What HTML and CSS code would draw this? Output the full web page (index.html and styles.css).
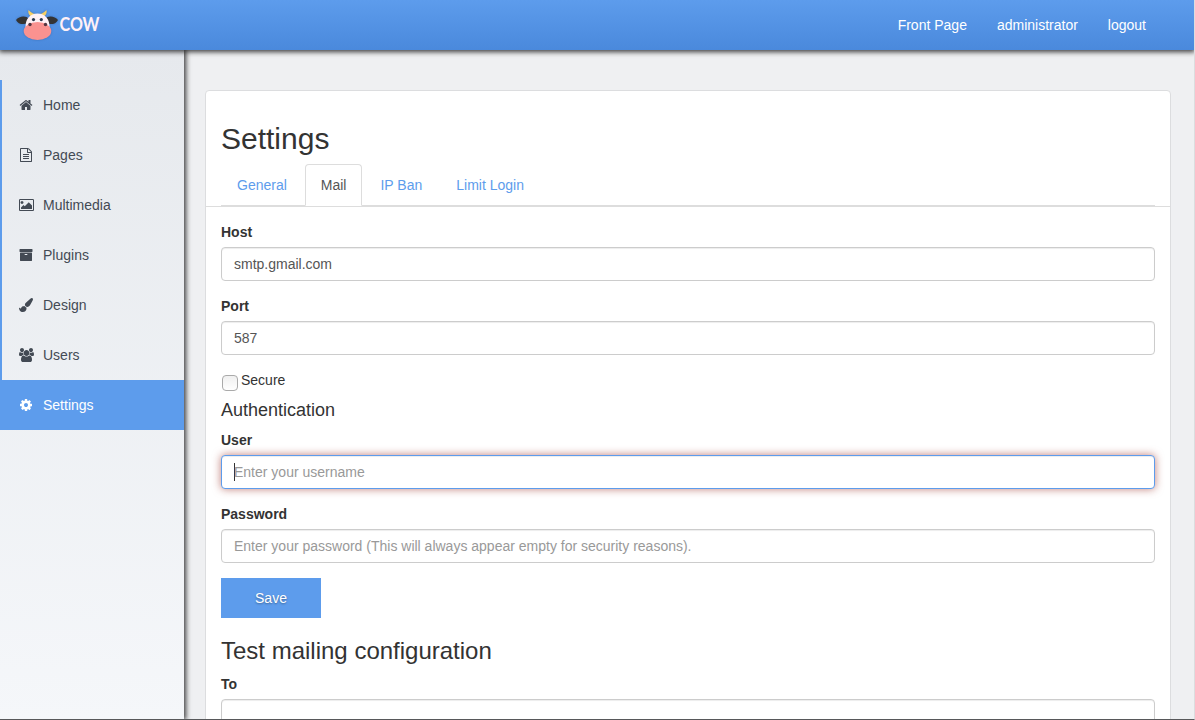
FILE: index.html
```
<!DOCTYPE html>
<html lang="en">
<head>
<meta charset="utf-8">
<title>Settings</title>
<link rel="stylesheet" href="styles.css">
</head>
<body>
<header class="topbar">
  <svg class="logo" viewBox="0 0 90 42" width="90" height="42" role="img" aria-label="Cow">
    <g class="halo">
      <path fill="#f6cf62" d="M13.5 7c-.8 4 1.2 6.500 5 7l1.500-3c-3-.5-4-2-6.500-4zM31.500 7c.8 4-1.200 6.500-5 7l-1.500-3c3-.5 4-2 6.500-4z"/>
      <path fill="#343434" d="M1 17c3-4 10-5 13-1l-1 4c-4 2-10 1.500-12-3zM43 17c-3-4-10-5-13-1l1 4c4 2 10 1.500 12-3z"/>
      <path fill="#fff1f5" d="M10.500 25c-.5-9 4.500-14.500 12-14.500S35 16 34.500 25z"/>
      <ellipse cx="22.500" cy="28" rx="13.800" ry="9" fill="#fa9290"/>
    </g>
    <g fill="#28384d"><circle cx="18.500" cy="16.600" r="1.600"/><circle cx="26.300" cy="16.600" r="1.600"/></g>
    <g fill="#54343f"><circle cx="15" cy="21.500" r="1.700"/><circle cx="30.500" cy="21.500" r="1.700"/></g>
    <text class="logo-text" x="44.500" y="28.300" textLength="40" lengthAdjust="spacingAndGlyphs">COW</text>
  </svg>
  <nav class="topnav"><a>Front Page</a><a>administrator</a><a>logout</a></nav>
</header>
<div class="layout">
  <aside class="sidebar">
    <ul class="menu">
      <li class="item"><svg class="icon" viewBox="0 0 1792 1792"><path d="M1472 992v480q0 26-19 45t-45 19h-384v-384h-256v384h-384q-26 0-45-19t-19-45v-480q0-1 .5-3t.5-3l575-474 575 474q1 2 1 6zm223-69l-62 74q-8 9-21 11h-3q-13 0-21-7l-692-577-692 577q-12 8-24 7-13-2-21-11l-62-74q-8-10-7-23.500t11-21.500l719-599q32-26 76-26t76 26l244 204v-195q0-14 9-23t23-9h192q14 0 23 9t9 23v408l219 182q10 8 11 21.500t-7 23.500z"/></svg>Home</li>
      <li class="item"><svg class="icon" viewBox="0 0 1792 1792"><path d="M1596 380q28 28 48 76t20 88v1152q0 40-28 68t-68 28h-1344q-40 0-68-28t-28-68v-1600q0-40 28-68t68-28h896q40 0 88 20t76 48zm-444-244v376h376q-10-29-22-41l-313-313q-12-12-41-22zm384 1528v-1024h-416q-40 0-68-28t-28-68v-416h-768v1536h1280zm-1024-864q0-14 9-23t23-9h704q14 0 23 9t9 23v64q0 14-9 23t-23 9h-704q-14 0-23-9t-9-23v-64zm736 224q14 0 23 9t9 23v64q0 14-9 23t-23 9h-704q-14 0-23-9t-9-23v-64q0-14 9-23t23-9h704zm0 256q14 0 23 9t9 23v64q0 14-9 23t-23 9h-704q-14 0-23-9t-9-23v-64q0-14 9-23t23-9h704z"/></svg>Pages</li>
      <li class="item"><svg class="icon wide" viewBox="0 0 1920 1792"><path d="M576 576q0 80-56 136t-136 56-136-56-56-136 56-136 136-56 136 56 56 136zm1088 384v448h-1408v-192l320-320 160 160 512-512zm96-704h-1600q-13 0-22.500 9.500t-9.500 22.500v1216q0 13 9.500 22.500t22.500 9.500h1600q13 0 22.500-9.500t9.500-22.500v-1216q0-13-9.500-22.500t-22.500-9.500zm160 32v1216q0 66-47 113t-113 47h-1600q-66 0-113-47t-47-113v-1216q0-66 47-113t113-47h1600q66 0 113 47t47 113z"/></svg>Multimedia</li>
      <li class="item"><svg class="icon" viewBox="0 0 1792 1792"><path d="M1088 832q0-26-19-45t-45-19h-256q-26 0-45 19t-19 45 19 45 45 19h256q26 0 45-19t19-45zm576-192v960q0 26-19 45t-45 19h-1408q-26 0-45-19t-19-45v-960q0-26 19-45t45-19h1408q26 0 45 19t19 45zm64-448v256q0 26-19 45t-45 19h-1536q-26 0-45-19t-19-45v-256q0-26 19-45t45-19h1536q26 0 45 19t19 45z"/></svg>Plugins</li>
      <li class="item"><svg class="icon" viewBox="0 0 1792 1792"><path d="M1615 0q70 0 122.500 46.500t52.500 116.500q0 63-45 151-332 629-465 752-97 91-218 91-126 0-216.500-92.500t-90.500-219.500q0-128 92-212l638-579q59-54 130-54zm-909 1034q39 76 106.500 130t150.500 76l1 71q4 213-129.500 347t-348.500 134q-123 0-218-46.500t-152.500-127.500-86.500-183-29-220q7 5 41 30t62 44.500 59 36.500 46 17q41 0 55-37 25-66 57.500-112.500t69.500-76 88-47.500 103-25.500 125-10.500z"/></svg>Design</li>
      <li class="item"><svg class="icon wide" viewBox="0 0 1920 1792"><path d="M593 896q-162 5-265 128h-134q-82 0-138-40.500t-56-118.500q0-353 124-353 6 0 43.500 21t97.500 42.500 119 21.500q67 0 133-23-5 37-5 66 0 139 81 256zm1071 637q0 120-73 189.500t-194 69.500h-874q-121 0-194-69.500t-73-189.500q0-53 3.500-103.500t14-109 26.500-108.500 43-97.500 62-81 85.500-53.500 111.500-20q10 0 43 21.500t73 48 107 48 135 21.500 135-21.500 107-48 73-48 43-21.500q61 0 111.500 20t85.500 53.500 62 81 43 97.500 26.500 108.500 14 109 3.500 103.500zm-1024-1277q0 106-75 181t-181 75-181-75-75-181 75-181 181-75 181 75 75 181zm704 384q0 159-112.500 271.500t-271.500 112.500-271.500-112.500-112.500-271.500 112.500-271.500 271.500-112.500 271.500 112.500 112.500 271.500zm576 225q0 78-56 118.500t-138 40.500h-134q-103-123-265-128 81-117 81-256 0-29-5-66 66 23 133 23 59 0 119-21.500t97.500-42.500 43.500-21q124 0 124 353zm-128-609q0 106-75 181t-181 75-181-75-75-181 75-181 181-75 181 75 75 181z"/></svg>Users</li>
      <li class="item active"><svg class="icon" viewBox="0 0 1792 1792"><path d="M1152 896q0-106-75-181t-181-75-181 75-75 181 75 181 181 75 181-75 75-181zm512-109v222q0 12-8 23t-20 13l-185 28q-19 54-39 91 35 50 107 138 10 12 10 25t-9 23q-27 37-99 108t-94 71q-12 0-26-9l-138-108q-44 23-91 38-16 136-29 186-7 28-36 28h-222q-14 0-24.500-8.500t-11.500-21.500l-28-184q-49-16-90-37l-141 107q-10 9-25 9-14 0-25-11-126-114-165-168-7-10-7-23 0-12 8-23 15-21 51-66.500t54-70.500q-27-50-41-99l-183-27q-13-2-21-12.500t-8-23.500v-222q0-12 8-23t19-13l186-28q14-46 39-92-40-57-107-138-10-12-10-24 0-10 9-23 26-36 98.500-107.500t94.500-71.500q13 0 26 10l138 107q44-23 91-38 16-136 29-186 7-28 36-28h222q14 0 24.500 8.500t11.500 21.500l28 184q49 16 90 37l142-107q9-9 24-9 13 0 25 10 129 119 165 170 7 8 7 22 0 12-8 23-15 21-51 66.500t-54 70.500q26 50 41 98l183 28q13 2 21 12.500t8 23.500z"/></svg>Settings</li>
    </ul>
  </aside>
  <main class="content">
    <section class="card">
      <div class="card-head">
        <h1>Settings</h1>
        <ul class="tabs"><li>General</li><li class="current">Mail</li><li>IP Ban</li><li>Limit Login</li></ul>
      </div>
      <form class="card-body">
        <label for="host">Host</label>
        <input class="field" id="host" type="text" value="smtp.gmail.com">
        <label for="port">Port</label>
        <input class="field" id="port" type="text" value="587">
        <div class="check"><input id="secure" type="checkbox"><label for="secure">Secure</label></div>
        <h4>Authentication</h4>
        <label for="user">User</label>
        <div class="field focused" id="user"><span class="caret"></span>Enter your username</div>
        <label for="password">Password</label>
        <input class="field" id="password" type="password" placeholder="Enter your password (This will always appear empty for security reasons).">
        <button class="save" type="button">Save</button>
        <h3>Test mailing configuration</h3>
        <label for="to">To</label>
        <input class="field" id="to" type="text">
      </form>
    </section>
  </main>
</div>
</body>
</html>
```
FILE: styles.css
```
* { box-sizing: border-box; }
body {
  margin: 0;
  height: 720px;
  overflow: hidden;
  display: flex;
  flex-direction: column;
  border-right: 1px solid #dcdddf;
  border-bottom: 1px solid #57585a;
  background: #eff0f2;
  color: #333;
  font: 14px/20px "Liberation Sans", Arial, sans-serif;
}
ul { list-style: none; margin: 0; padding: 0; }

.topbar {
  flex: none;
  height: 50px;
  display: flex;
  justify-content: space-between;
  padding: 3px 48px 0 15px;
  background: linear-gradient(#5d9cec, #4a89dc);
  box-shadow: 0 1px 5px 1px rgba(0, 0, 0, .75);
  position: relative;
  z-index: 2;
}
.logo { display: block; }
.halo { filter: drop-shadow(0 0 1px rgba(35, 80, 145, .5)); }
.logo-text { font: 700 19px Lato, sans-serif; fill: #fff1f7; }
.topnav { display: flex; gap: 30px; padding-top: 12px; color: #fff; }

.layout { flex: 1; min-height: 0; display: flex; }
.sidebar {
  flex: none;
  width: 184px;
  padding-top: 30px;
  background: linear-gradient(#e6e9ed, #f5f7fa);
  box-shadow: 1px 0 5px 1px rgba(0, 0, 0, .75);
}
.item {
  height: 50px;
  display: flex;
  align-items: center;
  padding-left: 17px;
  border-left: 2px solid #5d9cec;
  color: #434a54;
}
.item.active { background: #5d9cec; color: #fff; }
.icon { width: 14px; height: 14px; margin-right: 10px; fill: currentColor; }
.icon.wide { width: 15px; margin-right: 9px; }

.content { flex: 1; padding: 40px 23px 0 21px; }
.card {
  height: 700px;
  background: #fff;
  border: 1px solid #dcdddf;
  border-radius: 4px;
}
.card-head { padding: 31px 15px 0; border-bottom: 1px solid #ddd; }
h1, h3, h4 { margin: 0; font-weight: 400; }
h1 { font-size: 30px; line-height: 33px; margin-bottom: 9px; }
.tabs { display: flex; height: 42px; border-bottom: 1px solid #ddd; }
.tabs li {
  height: 42px;
  padding: 10px 15px;
  margin-right: 2px;
  border: 1px solid transparent;
  border-radius: 4px 4px 0 0;
  color: #5d9cec;
}
.tabs .current { color: #555; background: #fff; border-color: #ddd #ddd transparent; }

.card-body { padding: 15px 15px 0; display: flex; flex-direction: column; }
label { display: block; height: 20px; margin-bottom: 5px; font-weight: 700; }
.field {
  display: block;
  width: 100%;
  height: 34px;
  flex: none;
  margin: 0 0 15px;
  padding: 6px 12px;
  border: 1px solid #ccc;
  border-radius: 4px;
  background: #fff;
  box-shadow: inset 0 1px 1px rgba(0, 0, 0, .075);
  color: #555;
  font: inherit;
}
.field::placeholder { color: #999; opacity: 1; }
.focused {
  display: flex;
  align-items: center;
  border-color: #5d9cec;
  box-shadow: inset 0 1px 1px rgba(0, 0, 0, .075), 0 0 8px rgba(150, 40, 30, .6);
  color: #999;
}
.caret { width: 1px; height: 18px; margin-right: -1px; background: #333; }
.check { display: flex; height: 20px; }
.check label { font-weight: 400; margin: 0; }
.check input {
  appearance: none;
  width: 16px;
  height: 16px;
  margin: 5px 3px 0 1px;
  border: 1px solid #aaa;
  border-radius: 4px;
  background: linear-gradient(#f0f0f0, #fff);
}
h4 { font-size: 18px; line-height: 20px; margin: 10px 0; }
.save {
  width: 100px;
  height: 40px;
  padding: 0;
  border: 0;
  background: #5d9cec;
  color: #fff;
  font: inherit;
  text-shadow: 0 1px 2px rgba(0, 0, 0, .35);
}
h3 { font-size: 24px; line-height: 26px; margin: 20px 0 10px; }
```
